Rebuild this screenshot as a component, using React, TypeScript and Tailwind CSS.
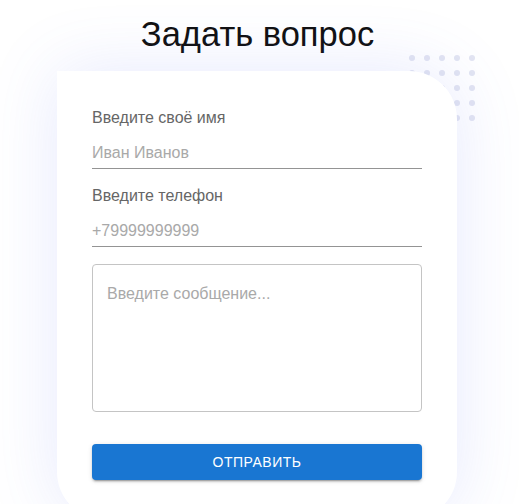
const dots = Array.from({ length: 25 }, (_, i) => i)

export default function App() {
  return (
    <div className="min-h-screen w-[515px] bg-white font-['Liberation_Sans',Arial,sans-serif]">
      <h1 className="pt-[13px] text-center text-[34.5px] leading-[42px] font-normal text-[#111]">
        Задать вопрос
      </h1>

      <div className="relative mt-[16px] ml-[57px] w-[400px]">
        {/* decorative dots behind the card */}
        <div className="absolute -top-[16px] left-[352px] grid w-max grid-cols-[repeat(5,6px)] gap-[9px]">
          {dots.map((d) => (
            <span key={d} className="block h-[6px] w-[6px] rounded-full bg-[#e3e5f2]" />
          ))}
        </div>

        <form
          onSubmit={(e) => e.preventDefault()}
          className="relative rounded-[48px] rounded-tl-none bg-white px-[35px] pt-[35px] pb-[40px] shadow-[0_0_70px_rgba(90,110,240,0.15)]"
        >
          <label className="block text-base leading-6 text-[#666]">Введите своё имя</label>
          <input
            type="text"
            placeholder="Иван Иванов"
            className="mt-[8px] block h-[31px] w-full border-b border-[#949494] pb-[1px] text-base text-[#222] outline-none placeholder:text-[#a9a9a9]"
          />

          <label className="mt-[15px] block text-base leading-6 text-[#666]">Введите телефон</label>
          <input
            type="tel"
            placeholder="+79999999999"
            className="mt-[8px] block h-[31px] w-full border-b border-[#949494] pb-[1px] text-base text-[#222] outline-none placeholder:text-[#a9a9a9]"
          />

          <textarea
            placeholder="Введите сообщение..."
            className="mt-[17px] block h-[148px] w-full resize-none rounded border border-[#c4c4c4] px-[14px] py-[16.5px] text-base leading-[23px] text-[#222] outline-none placeholder:text-[#a9a9a9]"
          />

          <button
            type="submit"
            className="mt-[32px] block h-[36px] w-full rounded bg-[#1976d2] text-[14px] tracking-[0.5px] text-white uppercase shadow-[0_3px_1px_-2px_rgba(0,0,0,0.2),0_2px_2px_0_rgba(0,0,0,0.14),0_1px_5px_0_rgba(0,0,0,0.12)]"
          >
            Отправить
          </button>
        </form>
      </div>
    </div>
  )
}
